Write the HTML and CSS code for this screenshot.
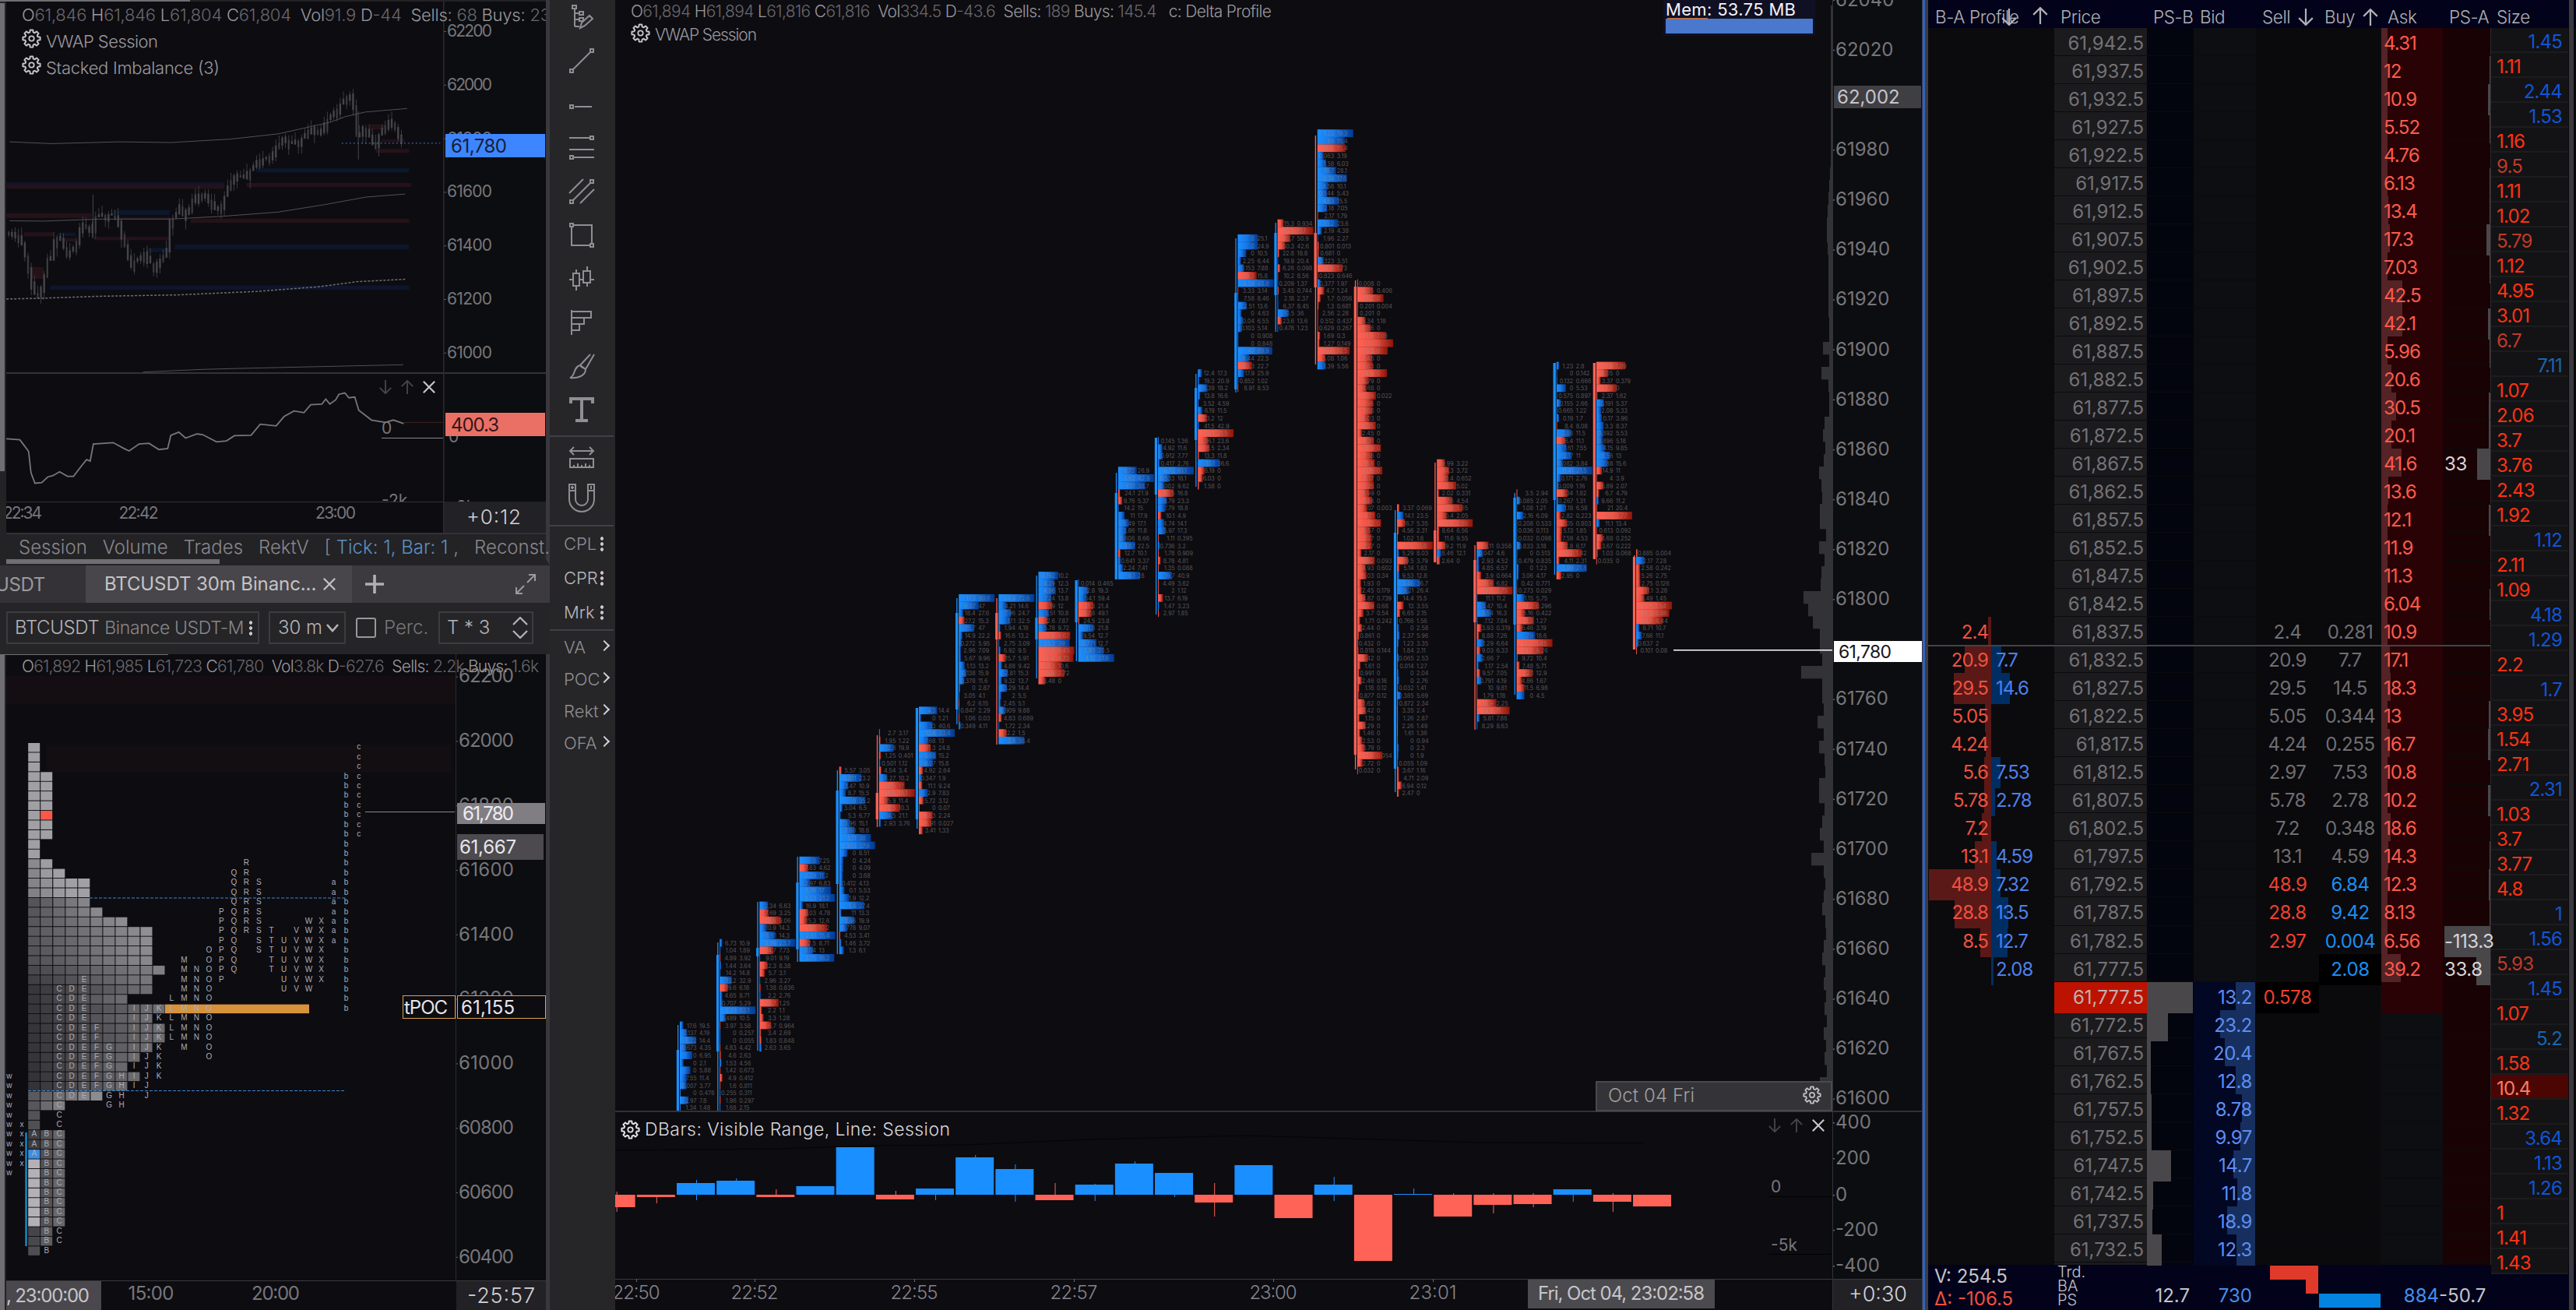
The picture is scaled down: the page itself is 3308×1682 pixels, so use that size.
FILE: index.html
```html
<!DOCTYPE html>
<html lang="en">
<head>
    <meta charset="UTF-8">
    <meta name="viewport" content="width=device-width, initial-scale=1.0">
    <title>BTCUSDT Order Flow</title>
    <link rel="stylesheet" href="styles.css">
</head>
<body>

<!-- Shared icons and gradients -->
<svg class="defs" width="0" height="0">
    <defs>
        <linearGradient id="buy-fill"><stop offset="0" stop-color="#1c8fff"/><stop offset=".45" stop-color="#1878e6"/><stop offset="1" stop-color="#003a94"/></linearGradient>
        <linearGradient id="sell-fill"><stop offset="0" stop-color="#ff6355"/><stop offset=".5" stop-color="#ea5244"/><stop offset="1" stop-color="#8e1508"/></linearGradient>
        <symbol id="gear" viewBox="-14 -14 28 28"><path id="gear-path" fill="none" stroke="currentColor" stroke-width="2.2" stroke-linejoin="round"/><circle r="3.6" fill="none" stroke="currentColor" stroke-width="2"/></symbol>
        <symbol id="close" viewBox="0 0 20 20"><path d="M2 2L18 18M18 2L2 18" stroke="currentColor" stroke-width="2.4"/></symbol>
        <symbol id="down" viewBox="0 0 20 20"><path d="M10 0V19M2 11L10 19L18 11" fill="none" stroke="currentColor" stroke-width="2"/></symbol>
        <symbol id="up" viewBox="0 0 20 20"><path d="M10 20V1M2 9L10 1L18 9" fill="none" stroke="currentColor" stroke-width="2"/></symbol>
    </defs>
</svg>

<div class="workspace">
    <!-- Left column: two small charts -->
    <div class="side">
        <svg id="tick-chart" width="706" height="686" viewBox="0 0 706 686"></svg>
        <div class="options">
            <span>Session</span><span>Volume</span><span>Trades</span><span>RektV</span>
            <span class="bracket">[ <b>Tick: 1, Bar: 1</b> ,</span><span>Reconst.</span>
        </div>
        <div class="tabs">
            <div class="tab">USDT</div>
            <div class="tab active">BTCUSDT 30m Binanc... <svg width="18" height="18"><use href="#close"/></svg></div>
            <svg class="plus" width="26" height="26" viewBox="0 0 26 26"><path d="M13 1V25M1 13H25" stroke="currentColor" stroke-width="3.6"/></svg>
            <svg class="expand" width="26" height="26" viewBox="0 0 26 26"><path d="M15 11L25 1M17 1H25V9M11 15L1 25M1 17V25H9" fill="none" stroke="currentColor" stroke-width="2"/></svg>
        </div>
        <div class="controls">
            <div class="field symbol">BTCUSDT <em>Binance USDT-M</em><i class="dots"></i></div>
            <div class="field period">30 m <svg width="16" height="12" viewBox="0 0 16 12"><path d="M1 2L8 10L15 2" fill="none" stroke="currentColor" stroke-width="2.6"/></svg></div>
            <i class="checkbox"></i><span class="perc">Perc.</span>
            <div class="field mult">T * 3 <svg width="20" height="28" viewBox="0 0 20 28"><path d="M1 10L10 1L19 10M1 18L10 27L19 18" fill="none" stroke="currentColor" stroke-width="2.2"/></svg></div>
        </div>
        <svg id="tpo-chart" width="706" height="842" viewBox="0 840 706 842"></svg>
    </div>

    <!-- Drawing tools -->
    <div class="tools">
        <div class="tool"><svg viewBox="0 0 32 32"><path d="M4 2H9V6H4ZM7 6V29M7 12H13M7 20H13M7 29H13M13 10H18V14H13ZM13 18H18V22H13ZM14 31L16 24L26 15L30 19L20 28Z"/></svg></div>
        <div class="tool"><svg viewBox="0 0 32 32"><path d="M4 28L28 4M1 27H5V31H1ZM27 1H31V5H27Z"/></svg></div>
        <div class="tool"><svg viewBox="0 0 32 32"><path d="M7 19H29M1 17H5V21H1Z"/></svg></div>
        <div class="tool"><svg viewBox="0 0 32 32"><path d="M0 3H27M27 1H31V5H27ZM0 18H32M5 28H32M1 26H5V30H1Z"/></svg></div>
        <div class="tool"><svg viewBox="0 0 32 32"><path d="M5 27L27 5M1 27H5V31H1ZM27 1H31V5H27ZM0 18L18 0M14 31L32 13"/></svg></div>
        <div class="tool"><svg viewBox="0 0 32 32"><path d="M5 3H29V27M27 29H3V5M1 1H5V5H1ZM27 27H31V31H27Z"/></svg></div>
        <div class="tool"><svg viewBox="0 0 32 32"><path d="M5 9H13V25H5ZM9 4V9M9 25V31M18 6H27V21H18ZM23 0V6M23 21V26M0 17H5M13 17H18M27 17H32"/></svg></div>
        <div class="tool"><svg viewBox="0 0 32 32"><path d="M3 0V32M3 2H28V10H3M19 10V18H3M13 18V26H3"/></svg></div>
        <div class="tool"><svg viewBox="0 0 32 32"><path d="M1 31C8 29 5 17 14 15L21 20C21 29 10 32 1 31ZM14 15L27 1M21 20L32 1M14 15C16 19 19 18 21 20"/></svg></div>
        <div class="tool text"><svg viewBox="0 0 32 32"><path d="M2 8V2H30V8M16 2V30M8 30H24"/></svg></div>
        <hr>
        <div class="tool ruler"><svg viewBox="0 0 32 32"><path d="M1 8H31M6 3L1 8L6 13M26 3L31 8L26 13M1 18H31V29H1ZM6 29V26M11 29V24M16 29V26M21 29V24M26 29V26"/></svg></div>
        <div class="tool magnet"><svg viewBox="0 0 34 38"><path d="M1 1H9V20A8 8 0 0 0 25 20V1H33V20A16 16 0 0 1 1 20ZM1 9H9M25 9H33M5 3V7M3 5H7M29 3V7"/></svg></div>
        <hr>
        <div class="item">CPL<i class="dots"></i></div>
        <div class="item lit">CPR<i class="dots"></i></div>
        <div class="item lit">Mrk<i class="dots"></i></div>
        <hr>
        <div class="item more">VA<i class="chev"></i></div>
        <div class="item more">POC<i class="chev"></i></div>
        <div class="item more">Rekt<i class="chev"></i></div>
        <div class="item more">OFA<i class="chev"></i></div>
    </div>

    <!-- Footprint chart -->
    <svg id="main-chart" width="1678" height="1682" viewBox="790 0 1678 1682"></svg>

    <!-- Depth of market -->
    <div class="dom">
        <div class="dom-head">
            <span class="h-profile">B-A Profile<svg width="22" height="22"><use href="#down"/></svg></span>
            <svg class="h-up" width="22" height="22"><use href="#up"/></svg>
            <span class="h-price">Price</span><span class="h-psb">PS-B</span><span class="h-bid">Bid</span>
            <span class="h-sell">Sell <svg width="22" height="22"><use href="#down"/></svg></span>
            <span class="h-buy">Buy <svg width="22" height="22"><use href="#up"/></svg></span>
            <span class="h-ask">Ask</span><span class="h-psa">PS-A</span><span>Size</span>
        </div>
        <div class="dom-body">
            <div class="book" id="book"></div>
            <div class="tape" id="tape"></div>
        </div>
        <div class="dom-foot">
            <div class="totals"><span>V: 254.5</span><span class="neg">Δ: -106.5</span></div>
            <div class="kinds"><span>Trd.</span><span>BA</span><span>PS</span></div>
            <div class="f-ps">12.7</div>
            <div class="f-bid">730</div>
            <svg width="160" height="58" viewBox="2898 1624 160 58"><path fill="#e03a2a" d="M2915 1625H2977V1661H2961V1643H2915Z"/><path fill="#0483e0" d="M2978 1661H3057V1679H2978Z"/></svg>
            <div class="f-ask">884</div>
            <div class="f-psa">-50.7</div>
        </div>
    </div>
</div>

<script src="charts.js"></script>
</body>
</html>
```
FILE: styles.css
```css
* {
    margin: 0;
    padding: 0;
    box-sizing: border-box;
}
body {
    width: 3308px;
    height: 1682px;
    overflow: hidden;
    background: #0d0c11;
    color: #8d8c91;
    font-family: Inter, "Liberation Sans", sans-serif;
    font-size: 24px;
}
svg {
    display: block;
    flex: none;
}
.defs {
    position: absolute;
}
.workspace {
    display: flex;
    height: 1682px;
}

/* Left column */
.side {
    width: 706px;
    flex: none;
    overflow: hidden;
}
.options {
    height: 40px;
    display: flex;
    align-items: center;
    gap: 20px;
    padding: 0 0 0 24px;
    background: #232225;
    border-bottom: 8px solid #232225;
    border-right: 5px solid #3a383c;
    font-weight: 300;
    white-space: nowrap;
    color: #88878b;
    position: relative;
}
.options::after {
    content: "";
    position: absolute;
    left: 8px;
    top: 32px;
    width: 274px;
    height: 6px;
    background: #6f6e72;
}
.options b {
    font-weight: 300;
    color: #5a8fc4;
}
.tabs {
    height: 48px;
    display: flex;
    align-items: center;
    background: #3c3a3e;
    color: #9a999d;
}
.tab {
    width: 110px;
    height: 48px;
    line-height: 50px;
    overflow: hidden;
    text-indent: -6px;
    letter-spacing: -.4px;
    background: #343236;
}
.tab.active {
    width: 342px;
    display: flex;
    align-items: center;
    justify-content: space-between;
    padding: 0 20px 0 30px;
    background: #48464a;
    color: #c4c3c7;
    letter-spacing: -.1px;
    white-space: nowrap;
}
.plus {
    margin-left: 16px;
    color: #b0afb3;
}
.expand {
    margin-left: auto;
    margin-right: 18px;
    color: #9a999d;
}
.controls {
    height: 66px;
    display: flex;
    align-items: center;
    padding-left: 8px;
    background: #252427;
    border-bottom: 3px solid #252427;
    font-weight: 300;
}
.field {
    height: 42px;
    display: flex;
    align-items: center;
    justify-content: space-between;
    border: 2px solid #3d3b3f;
    color: #b5b4b8;
    white-space: nowrap;
}
.field em {
    font-style: normal;
    color: #88878b;
    font-size: 23px;
}
.symbol {
    width: 325px;
    padding: 0 7px 0 9px;
    letter-spacing: -.35px;
}
.period {
    width: 99px;
    margin-left: 12px;
    padding: 0 7px 0 10px;
}
.mult {
    width: 122px;
    margin-left: 13px;
    padding: 0 5px 0 9px;
}
.checkbox {
    width: 26px;
    height: 26px;
    margin: 0 10px 0 13px;
    border: 2px solid #98979b;
    border-radius: 3px;
}
.perc {
    width: 57px;
    color: #77767a;
}
.dots {
    width: 4px;
    height: 20px;
    background: radial-gradient(circle at center, #c4c3c7 2px, transparent 2.4px) 0 0 / 4px 7px;
}

/* Drawing tools */
.tools {
    width: 84px;
    flex: none;
    height: 1682px;
    overflow: hidden;
    background: #262528;
    color: #8f8e92;
}
.tool {
    height: 56px;
    padding: 12px 0 0 25px;
}
.tool:first-child {
    height: 50px;
    padding-top: 5px;
}
.tool svg {
    width: 32px;
    height: 32px;
    fill: none;
    stroke: currentColor;
    stroke-width: 2;
    overflow: visible;
}
.tool.text {
    height: 61px;
}
.tool.text svg {
    stroke-width: 4;
}
.tools hr {
    width: 82px;
    border: 0;
    border-top: 2px solid #414044;
}
.tool.ruler {
    height: 52px;
    padding-top: 10px;
}
.tool.magnet {
    height: 61px;
    padding: 8px 0 0 24px;
}
.tool.magnet svg {
    width: 34px;
    height: 38px;
}
.item {
    height: 44px;
    display: flex;
    align-items: center;
    padding-left: 18px;
    font-size: 22px;
    font-weight: 300;
    position: relative;
}
.item.lit {
    color: #b9b8bc;
}
.item.more {
    height: 41px;
}
.item .dots {
    position: absolute;
    left: 65px;
    top: 12px;
}
.chev {
    position: absolute;
    left: 65px;
    top: 14px;
    width: 10px;
    height: 10px;
    border: solid #d4d3d7;
    border-width: 2px 2px 0 0;
    transform: rotate(45deg);
}

/* Chart text */
text {
    font-family: Inter, "Liberation Sans", sans-serif;
    font-size: 24px;
    fill: #77767b;
}
.legend text {
    fill: #9a999d;
    font-weight: 300;
}
.legend tspan {
    fill: #68676b;
}
.lit-text {
    fill: #c6c5c9;
}
.timer {
    font-size: 27px;
    font-weight: 300;
    fill: #d2d1d5;
}
.cells text {
    font-size: 7.2px;
    fill: #8d8d90;
    fill-opacity: .62;
}
.letters text {
    font-family: "Liberation Sans", sans-serif;
    font-size: 10px;
    fill: #aeadb1;
    text-anchor: middle;
}

/* Depth of market */
.dom {
    width: 840px;
    flex: none;
    background: #0a090c;
    border-left: 8px solid #3d3c40;
    position: relative;
}
.dom::before {
    content: "";
    position: absolute;
    left: -7px;
    top: 0;
    width: 3px;
    height: 1682px;
    background: #2f62c4;
}
.dom::after {
    content: "";
    position: absolute;
    right: 3px;
    top: 0;
    width: 6px;
    height: 1682px;
    background: #3a393d;
}
.dom-head {
    height: 36px;
    display: flex;
    align-items: center;
    padding: 7px 0 0 9px;
    background: #02031a;
    color: #b1b0b6;
    font-size: 22.5px;
    font-weight: 300;
    letter-spacing: -.4px;
    white-space: nowrap;
}
.dom-head svg {
    display: inline-block;
    vertical-align: -3px;
    margin-left: 3px;
}
.h-profile { width: 124px; }
.h-profile svg { margin-left: -24px; }
.dom-head .h-up { margin: -3px 15px 0 0; }
.h-price { width: 119px; }
.h-psb { width: 60px; }
.h-bid { width: 80px; }
.h-sell { width: 80px; }
.h-buy { width: 81px; }
.h-ask { width: 79px; }
.h-psa { width: 61px; }
.dom-body {
    height: 1588px;
    display: flex;
}
.book {
    width: 723px;
    height: 1588px;
    background: linear-gradient(90deg, #0b0a0d 162px, #1b1a1d 162px 281px, #02040e 281px 341px, #0d0e11 341px 421px, #0a090c 421px 581px, #0d0e11 581px 661px, #190204 661px 722px, #2f2a2d 722px);
    position: relative;
}
.book::after {
    content: "";
    position: absolute;
    left: 0;
    top: 792px;
    width: 722px;
    height: 2px;
    background: #444347;
}
.row {
    height: 36.03px;
    display: grid;
    grid-template-columns: 81px 81px 119px 60px 80px 81px 80px 79px 61px;
    border-bottom: 1.4px solid #0b0a0d;
    line-height: 40px;
    color: #6f6e72;
    white-space: nowrap;
    letter-spacing: -.4px;
}
.row > div {
    position: relative;
}
.row span {
    position: relative;
}
.bar {
    position: absolute;
    top: 0;
    bottom: 0;
}
.p-sell { text-align: right; padding-right: 4px; color: #f0503f; letter-spacing: -.9px; }
.p-buy { padding-left: 6px; color: #4d80ea; letter-spacing: -.9px; }
.p-sell .bar { right: 0; background: #5a1917; }
.p-buy .bar { left: 0; background: #002e62; }
.price { text-align: right; padding-right: 4px; color: #737276; letter-spacing: 0; }
.psb .bar { left: 0; background: #49474a; }
.bid { text-align: right; padding-right: 5px; color: #5c8ef2; }
.bid .bar { right: 1px; background: #162f5f; }
.bids .bid { background: #020724; }
.sell, .buy { text-align: center; }
.ask { padding-left: 3px; color: #ff5a4c; letter-spacing: -.9px; }
.asks .ask { background: #280204; }
.ask .bar { left: 0; background: #532325; }
.row .psa { padding-left: 2px; color: #d6d5d9; z-index: 2; }
.psa .bar { right: 0; background: #49474a; }
.hot .sell { color: #f0402f; }
.hot .buy { color: #1a8ff0; }
.best-ask .buy { background: #000; }
.best-bid .sell { background: #000; }
.best-bid .price { background: #bb1300; color: #c3aeb0; }
.best-bid .ask { background: #280204; }
.tape {
    width: 99px;
    height: 1600px;
    background: #131214;
    color: #ff3213;
    font-size: 24px;
    letter-spacing: -.8px;
    line-height: 34px;
    position: relative;
}
.tape div {
    height: 32px;
    padding: 1px 8px 0 7px;
    border-bottom: 2px solid #1c1b1e;
}
.tape .b { text-align: right; color: #0f55d8; }
.tape .c { text-align: right; color: #1766b0; }
.tape .d { color: #c03a28; }
.tape .x { background: #4b0503; color: #ff7a62; }
.dom-foot {
    height: 58px;
    display: flex;
    background: #02031a;
    color: #c4c3c9;
    white-space: nowrap;
}
.totals {
    width: 166px;
    padding-left: 8px;
    display: flex;
    flex-direction: column;
    line-height: 29px;
}
.neg { color: #f0503f; }
.kinds {
    width: 115px;
    display: flex;
    flex-direction: column;
    font-size: 20px;
    line-height: 18px;
    font-weight: 300;
}
.f-ps, .f-bid, .f-ask, .f-psa {
    padding-top: 25px;
}
.f-ps { width: 55px; text-align: right; }
.f-bid { width: 80px; text-align: right; color: #4390ee; }
.dom-foot svg { margin-left: 6px; }
.f-ask { width: 74px; text-align: right; color: #4390ee; }
```
FILE: charts.js
```js
const BLUE = '#1a8fff', RED = '#ff6257';
const $ = id => document.getElementById(id);
const rect = (x, y, w, h, fill, extra = '') => `<rect x="${x}" y="${y}" width="${w}" height="${h}" fill="${fill}" ${extra}/>`;
const text = (x, y, s, extra = '') => `<text x="${x}" y="${y}" ${extra}>${s}</text>`;
const icon = (id, x, y, size, color) => `<use href="#${id}" x="${x}" y="${y}" width="${size}" height="${size}" color="${color}"/>`;
const end = 'text-anchor="end"', mid = 'text-anchor="middle"';

// Gear outline with eight teeth
let gear = '';
for (let i = 0; i < 8; i++) {
    [[-15, 9.4], [-9, 12.6], [9, 12.6], [15, 9.4]].forEach(([da, r]) => {
        const a = (i * 45 + da) * Math.PI / 180;
        gear += `${gear ? 'L' : 'M'}${(Math.cos(a) * r).toFixed(2)} ${(Math.sin(a) * r).toFixed(2)}`;
    });
}
$('gear-path').setAttribute('d', gear + 'Z');

/* ---------- Footprint chart ---------- */
// [first row, wick top, wick bottom, body top, body bottom, side, "sell buy,..."]
const columns = [
    [119, 1316, 1427, 1348, 1427, 'b', '17.6 19.5,0.137 4.19,5.22 14.4,0.673 4.35,0 6.95,0 2.1,0 5.88,7.55 11.4,0.007 3.77,0 0.478,2.97 7.8,1.34 1.48', 20],
    [108, 1210, 1427, 1226, 1350, 'b', '6.73 10.9,1.04 1.89,4.89 3.92,1.44 3.64,14.2 14.8,13.2 32.9,19.6 6.18,4.65 8.71,0.707 5.29,5.33 63.1,0.489 10.5,3.97 3.58,0 0.257,0 0.055,4.83 4.42,4.6 2.63,1.53 4.56,1.42 0.673,4.9 0.412,1.6 0.811,0.255 0.311,1.96 0.297,1.68 2.15'],
    [103, 1158, 1349, 1217, 1228, 'b', '2.34 6.63,7.69 3.25,19.6 9.06,10.9 14.3,6.61 14.3,5.99 23.7,14.7 7.73,9.01 9.19,12.3 8.38,5.7 3.1,2.96 3.27,1.38 0.836,2.2 2.76,10.7 1.25,2.2 1.1,3.3 1.28,6.7 0.964,3.4 2.69,1.83 0.848,2.63 3.65'],
    [97, 1100, 1235, 1133, 1219, 'b', '0 7.25,7.83 4.62,2.09 11.2,2.97 6.83,5.76 17,8.53 21.2,16.9 18.1,8.03 4.78,15.3 12.6,20.1 10.2,2.61 15.4,12.5 8.71,8.04 13,3.75 16.2'],
    [85, 989, 1225, 1015, 1135, 'b', '5.57 3.05,0.011 23.2,1.47 10.9,8.7 15.5,8 35.2,3.04 6.5,5.3 6.77,3.96 15.1,2.68 18.6,5.11 38,0.303 37.6,0 8.51,0 4.24,0 4.09,0 3.68,0.412 4.13,0.1 5.53,1.9 12.2,1.4 27.4,11 13.3,3.96 19.9,0.778 9.07,4.53 3.41,1.46 3.72,1.3 6.1'],
    [80, 944, 1062, 1018, 1052, 'r', '2.7 3.17,1.95 1.22,12.8 19.9,1.25 0.401,0.501 1.12,4.54 3.4,6.27 10.2,29.5 17,35.6 18.1,15.9 11.4,20.5 10.3,14.5 21.1,2.93 3.76'],
    [77, 909, 1064, 909, 1052, 'b', '4.3 14.4,0 1.21,33 40.6,13.6 33.4,7.68 13,31.3 24.8,5.68 15.2,8.07 15.8,4.92 2.64,0.347 1.9,11.1 9.24,2.9 7.83,5.72 3.12,0 0.07,9.83 2.24,6.91 0.027,3.41 1.33'],
    [62, 768, 930, 787, 911, 'b', '17.3 90.6,6.07 47,18.4 27.6,27.2 15.3,15.7 47,14.9 22.2,0.272 5.95,2.96 7.09,5.67 9.96,1.13 13.2,0.138 15.9,0.378 11.6,0 2.87,3.05 4.1,6.2 6.15,0.847 2.29,1.06 0.03,0.349 4.11'],
    [62, 768, 956, 787, 821, 'r', '24.6 72.6,4.21 14.6,7.96 24.7,17.1 32.5,1.94 4.18,16.6 13.2,2.75 3.09,6.92 9.5,15.7 5.91,4.88 9.42,2.81 15.3,9.32 13.7,3.29 14.4,2 5.5,2.45 5.1,0.909 9.88,4.83 0.689,1.72 2.34,12.2 1.5,3.8 38.4'],
    [59, 739, 871, 793, 821, 'b', '0.192 10.2,4.29 12.3,4.96 13.7,7.24 13.8,19 12,5.51 10.8,12.6 7.87,5.78 9.72,25.8 9.67,23.2 39,24.6 6.45,22.4 4.73,22.3 10.6,15.9 2.72,3.48 0'],
    [60, 745, 849, 745, 799, 'b', '0.014 0.465,12.8 19.3,54.1 59.4,31.3 21.4,57.8 49.1,24.5 23.8,11.8 21.8,9.54 12.7,0.771 12.7,3.93 20.5,4.12 27.6'],
    [45, 607, 744, 633, 744, 'b', '6.72 26.9,3.92 42.9,9.17 38.7,24.1 21.9,9.76 5.37,14.2 15,11 17.9,5.49 17.1,2.86 11.8,0.606 8.66,3.87 22.5,12.7 10.1,0.641 3.37,2.24 7.41,4.1 28'],
    [41, 562, 789, 562, 635, 'b', '0.145 1.36,4.92 11.6,0.912 7.77,0.417 2.76,6.72 61.1,0.533 18.1,0.002 9.62,40.5 16.8,9.79 23.3,7.79 18.8,10.1 4.9,4.74 14.1,5.97 17.3,1.11 0.395,0.736 3.2,1.78 0.909,8.78 4.81,1.35 0.088,19.7 40.9,4.49 3.62,2 1.12,13.7 6.19,1.47 3.23,2.97 1.85'],
    [32, 480, 625, 498, 565, 'b', '12.4 17.3,19.3 20.9,6.39 18.2,13.8 16.6,3.52 4.59,6.19 11.5,23.2 12,41.5 42.9,65.1 21.5,36.1 23.6,16.5 2.34,13.3 11.8,10.1 36.6,8.19 0,6.03 0,1.58 0'],
    [14, 306, 504, 376, 500, 'b', '0 25.1,0 24.9,0 10.5,2.25 6.44,0.153 7.88,39.3 15.8,4.34 48.8,3.33 3.14,7.58 8.46,2.51 13.6,0 4.63,0.04 6.55,0.103 5.14,0 0.908,0 0.848,47 89.9,8.44 22.5,40.3 22.7,17.9 25.9,0.852 1.02,8.91 8.53'],
    [12, 286, 426, 299, 379, 'b', '15.3 0.934,98.2 15.1,80.7 50.9,60.3 42.6,22.8 18.8,19.9 20.4,6.26 0.098,10.2 8.56,0.209 1.37,3.45 0.744,2.18 2.37,6.37 8.45,10.5 36,23.6 13.6,0.478 1.23'],
    [0, 174, 468, 299, 369, 'r', '1.22 19.3,1.6 15.4,29.6 15.4,0.063 3.19,1.58 6.03,18.7 28.1,2.74 17.6,4.58 10.1,0.544 5.43,4.63 15.5,2.18 7.05,2.17 1.79,13.2 23.6,2.19 4.38,1.96 2.27,0.801 0.013,0.681 0,0.323 3.51,14.4 1.73,0.823 0.646,0.377 1.97,4.7 1.24,1.7 0.056,1.3 0.681,2.56 2.28,0.512 0.437,0.629 0.267,1.69 0.3,1.27 0.149,26.8 10.5,5.08 1.06,1.39 5.56'],
    [20, 360, 988, 368, 969, 'r', '0.008 0,8.25 0.406,13.2 0,0.201 0.004,0.201 0,5.34 1.18,6.86 0,21.6 7.08,18 0,15.3 0,7.48 0,7.83 0,14.9 0,5.79 0,4.68 0,9.39 0.022,7.96 0,7.68 0,6.03 0,9.35 0,2.45 0,8.31 0,11.9 0,7.58 0,8.8 0,12.6 0,8.17 0,8.35 0,5.99 0,7.44 0,5.07 0.003,9.11 0,12 0,6.57 0,7.27 0,7.27 0,2.17 0,8.92 0.093,4.93 0.602,5.03 0.34,1.93 0,2.45 0.179,4.87 0.739,9.29 0.68,3.7 0.54,1.71 0.242,2.44 0,0.861 0,0.432 0,0.818 0.144,5.42 0,1.61 0,0.991 0,2.46 0.16,1.18 0.12,0.877 0.12,3.62 0,4.42 0,1.15 0,4.29 0,1.46 0,2.53 0,3.79 0,12.6 0.054,2.72 0,0.032 0'],
    [50, 655, 1017, 684, 987, 'b', '3.37 0.069,14.1 23.5,16.7 5.35,4.56 2.31,1.02 1.6,67.5 15.8,5.29 8.03,19.5 3.79,5.14 1.83,9.53 12.8,3.46 36.7,9.21 26.4,14.4 15.5,13 3.55,6.65 2.15,0.766 1.56,0 2.58,2.37 5.96,1.23 3.35,1.84 2.11,0.065 2.53,0.014 1.27,0 2.04,0 2.76,0.032 1.41,0.385 5.69,0.872 2.34,3.35 2.4,1.26 2.87,2.26 1.49,1.61 1.36,0 0.94,0 2.3,0 1.9,0.055 1.09,3.67 1.16,4.71 2.09,6.94 0.12,2.47 0'],
    [44, 594, 722, 681, 722, 'r', '9.99 3.22,14.3 3.72,10.4 0.652,21.5 5.02,2.02 0.331,17.6 4.54,27.4 5.65,10.4 2.05,39.4 8.86,8.64 6.56,11.6 9.55,19.2 11.9,8.46 12.1,2.64 0'],
    [55, 700, 937, 719, 799, 'r', '9.11 0.358,0.047 4.6,2.93 4.52,4.85 6.57,3.9 0.664,19.6 6.82,29.5 2.75,11.1 11.2,3.47 10.4,5.54 16.3,7.12 7.84,3.93 0.319,8.88 7.26,1.29 6.64,9.03 6.33,2.66 7,1.17 2.54,9.57 7.05,0.791 4.19,10 9.81,1.79 1.18,16.9 2.25,35.5 11,5.81 7.86,8.29 8.63'],
    [48, 633, 892, 639, 802, 'b', '3.5 2.94,0.085 2.05,1.08 1.21,2.16 6.09,0.208 0.533,0.036 0.113,0.032 0.098,0.833 3.18,0 0.513,0.479 0.835,0 1.23,3.06 4.17,0.42 0.771,0.273 0.029,1.15 5.75,13.2 0.296,5.16 0.422,11.3 1.27,6.46 3.19,7.9 18.6,22.2 1.45,24.7 9.26,9.72 10.4,7.48 5.71,22.1 12.9,4.86 1.67,11.5 6.98,0 4.5'],
    [31, 466, 738, 466, 642, 'b', '1.23 2.8,0 0.142,0.132 0.666,0 5.53,0.575 0.897,0.155 2.66,0.665 1.22,0.19 1.7,8.4 8.08,2.88 11.5,16.4 11.1,1.61 7.55,2.17 11,0.082 3.84,0.41 21.5,0.171 2.76,0.009 1.16,8.34 1.82,0.267 1.31,1.18 6.58,2.82 0.223,7.05 0.803,5.13 1.85,7.59 4.53,12.8 6.17,16.2 1.42,4.11 2.31,3.99 21.8,2.95 0'],
    [31, 466, 718, 466, 718, 'r', '20.8 1.09,8.05 0,3.37 0.379,13.8 0,2.37 1.62,0.191 5.37,2.08 5.33,0.17 3.96,3.3 8.37,0.892 5.53,0.896 5.18,4.15 9.85,3.56 13,7.88 15.6,14.9 11,4 3.9,6.89 2.07,6.7 4.79,9.66 11.2,21 20.4,27.1 2.77,11.1 13.4,0.613 0.092,4.68 0.252,3.67 0.222,1.03 0.068,0.035 0'],
    [56, 713, 834, 715, 834, 'r', '0.885 0.004,2.17 7.28,2.58 0.242,5.26 2.75,2.75 0.126,11.1 3.28,6.49 1.45,23.6 1.54,26.3 5.86,20.7 4.44,8.71 10.7,7.66 11.1,0.637 2,0.101 0.08']
];
const ROW = 9.625, COL = 51.17;
let out = rect(790, 0, 1564, 1682, '#0d0c11') + rect(2354, 0, 114, 1682, '#0c0d10');

// Session volume profile along the price axis, 16px bins from the top
const profile = [3, 3, 3, 3, 3, 3, 3, 3, 3, 3, 3, 3, 3, 4, 5, 6, 7, 8, 8, 7, 6, 6, 6, 6, 6, 5, 5, 13, 5, 15, 6, 5, 5, 11, 13, 10, 12, 18, 15, 14, 17, 17, 9, 18, 11, 15, 16, 38, 32, 26, 17, 17, 14, 41, 14, 14, 12, 20, 12, 18, 11, 10, 18, 18, 11, 14, 17, 12, 28, 12, 10, 12, 14, 10, 9, 12, 14, 10, 12, 9, 11, 8, 12, 9, 11, 8, 17, 8];
profile.forEach((w, i) => out += rect(2354 - w, 7 + i * 16, w, 16.3, '#333236'));

out += '<g class="cells">';
columns.forEach(([first, wt, wb, bt, bb, side, data, scale], i) => {
    const x = 873 + i * COL, color = side === 'b' ? BLUE : RED;
    const rows = data.split(',').map(r => r.split(' '));
    const max = scale || Math.max(...rows.map(([s, b]) => Math.abs(b - s)));
    rows.forEach(([s, b], k) => {
        const y = 171.6 + (first + k) * ROW;
        out += rect(x, y - 5.4, Math.max(1, Math.abs(b - s) / max * 46), 9.8, `url(#${+b > +s ? 'buy' : 'sell'}-fill)`);
    });
    rows.forEach(([s, b], k) => {
        const y = 174.2 + (first + k) * ROW;
        out += text(x + 21.5, y, s, end) + text(x + 25, y, b);
    });
    out += rect(x - 3, wt, 1.3, wb - wt, color) + rect(x - 4.2, bt, 3.3, bb - bt, color);
});
out += '</g>';

// Price scale
for (let p = 61600; p <= 62040; p += 20) {
    const y = 448.5 + (61900 - p) * 3.2065;
    if (p !== 61780 && p !== 62000) out += rect(2353, y, 3, 1.5, '#666') + text(2357, y + 8, p);
}
out += rect(2149, 834, 204, 1.5, '#fff');
out += rect(2355, 110, 112, 29, '#3f3e43') + text(2359, 133, '62,002', 'class="lit-text"');
out += rect(2355, 823, 113, 27, '#fff') + text(2361, 845, '61,780', 'style="fill:#16151a;font-size:23px" textLength="68"');

// Lower delta pane: bar ends measured from the zero line at 1534
out += rect(790, 1427, 1678, 255, '#0d0c11') + rect(2354, 1427, 114, 255, '#0c0d10');
const delta = [-16, -3, 15, 18, -3, 11, 61, -6, 8, 48, 33, -7, 13, 40, 28, -10, 38, -30, 13, -85, 1, -28, -13, -12, 7, -9, -15];
const wicks = [[4, 22], [0, 11], [19, -7], [21, 0], [7, 0], [0, 0], [0, 0], [5, 0], [0, -7], [51, 0], [39, -9], [15, 0], [14, -8], [43, 0], [28, -3], [15, -28], [38, 0], [0, 0], [23, -8], [0, 0], [8, 0], [2, 0], [2, -24], [2, -16], [7, -9], [2, -22], [0, 0]];
delta.forEach((d, i) => {
    const x = 869 + (i - 2) * COL, color = d > 0 ? BLUE : RED;
    out += rect(Math.max(790, x), d > 0 ? 1534 - d : 1534, x < 790 ? x + 49 - 790 : 49, Math.abs(d), color);
    const [hi, lo] = wicks[i];
    out += rect(x + 25, 1534 - hi, 1, hi + Math.abs(lo), color);
});
[['400', 1441], ['200', 1487], ['0', 1534], ['-200', 1579], ['-400', 1625]].forEach(([s, y]) => out += rect(2353, y, 3, 1.5, '#666') + text(2357, y + 8, s));
out += text(2274, 1531, '0', 'style="font-size:21px"') + text(2274, 1606, '-5k', 'style="font-size:21px"') + rect(2272, 1536, 80, 1, '#000') + rect(2272, 1610, 80, 1, '#000');
out += `<path d="M790 1477L1000 1475L1120 1471L1240 1470L1400 1463L1600 1458L1900 1467L2110 1468" fill="none" stroke="#050508"/>`;
out += rect(790, 1426, 1678, 2, '#333236') + rect(790, 1642, 1678, 1, '#3a393d') + rect(2353, 0, 1, 1682, '#333236');
out += `<g class="legend">${icon('gear', 797, 1438, 25, '#e4e3e7')}${text(828, 1458, 'DBars: Visible Range, Line: Session', 'textLength="392" style="fill:#d8d7db;font-size:23px"')}</g>`;
out += icon('down', 2270, 1436, 18, '#47464a') + icon('up', 2298, 1436, 18, '#47464a') + icon('close', 2326, 1436, 18, '#c6c5c9');

// Date tag and time scale
out += rect(2050, 1389, 302, 37, '#343337', 'stroke="#4a494d" stroke-width="2"') + text(2065, 1415, 'Oct 04 Fri', 'textLength="111" style="fill:#a09fa3;font-weight:300"') + icon('gear', 2315, 1394, 24, '#c0bfc3');
[['22:50', 817], ['22:52', 969], ['22:55', 1174], ['22:57', 1379], ['23:00', 1635], ['23:01', 1840]].forEach(([s, x]) => out += rect(x, 1642, 1, 4, '#666') + text(x, 1668, s, mid + ' textLength="61" style="font-weight:300;fill:#85848a"'));
out += rect(1962, 1643, 240, 37, '#4b4a4e') + text(2082, 1669, 'Fri, Oct 04, 23:02:58', mid + ' textLength="214" class="lit-text"');
out += rect(2354, 1643, 114, 39, '#222125') + text(2449, 1671, '+0:30', end + ' textLength="75" class="timer"');

// Legend and memory badge
out += `<g class="legend">${text(810, 22, 'O<tspan>61,894</tspan> H<tspan>61,894</tspan> L<tspan>61,816</tspan> C<tspan>61,816</tspan>&#160; Vol<tspan>334.5</tspan> D<tspan>-43.6</tspan>&#160; Sells: <tspan>189</tspan> Buys: <tspan>145.4</tspan>&#160;&#160; c: Delta Profile', 'textLength="823" style="font-size:21px"')}
${icon('gear', 810, 30, 25, '#c6c5c9')}${text(841, 52, 'VWAP Session', 'textLength="131" style="font-size:21px"')}</g>`;
out += rect(2136, 0, 195, 46, '#101024') + text(2139, 20, 'Mem: 53.75 MB', 'textLength="167" style="fill:#f4f3f8;font-size:22px"') + rect(2139, 24, 189, 19, '#4a78cc') + rect(2141, 23, 52, 2, '#b4704a');
$('main-chart').innerHTML = out;

/* ---------- Tick chart, traced in a 1568 unit square ---------- */
const SX = 1 / 1.96, SY = 1 / 2.24;
const line = (pts, stroke, extra = '') => `<path d="M${pts.map(([x, y]) => `${(x * SX).toFixed(1)} ${(y * SY).toFixed(1)}`).join('L')}" fill="none" stroke="${stroke}" ${extra}/>`;
out = rect(0, 0, 706, 686, '#232225') + rect(8, 2, 562, 682, '#0d0c11') + rect(570, 2, 131, 682, '#0c0d10');
const zones = [[16, 565, 536, 14, 'r'], [620, 1035, 532, 12, 'r'], [645, 1030, 490, 12, 'b'], [16, 230, 620, 14, 'r'], [285, 428, 611, 14, 'b'], [300, 428, 628, 6, 'r'], [480, 1030, 635, 12, 'r'], [60, 135, 674, 12, 'r'], [145, 190, 674, 10, 'b'], [160, 190, 690, 10, 'r'], [235, 425, 686, 10, 'r'], [370, 430, 719, 12, 'b'], [440, 1030, 710, 14, 'b'], [80, 110, 785, 34, 'r'], [125, 1030, 827, 12, 'b'], [930, 970, 365, 16, 'r'], [960, 1020, 405, 8, 'r'], [945, 1030, 434, 12, 'r'], [16, 565, 527, 6, 'b']];
zones.forEach(([x1, x2, y, h, c]) => out += rect(x1 * SX, (y - h / 2) * SY, (x2 - x1) * SX, h * SY, c === 'r' ? '#251219' : '#0c172c'));
const trend = [[20, 670], [50, 680], [60, 710], [72, 760], [80, 800], [88, 850], [96, 850], [104, 835], [112, 820], [122, 745], [135, 740], [140, 690], [152, 680], [160, 705], [170, 725], [185, 725], [195, 700], [205, 655], [215, 645], [225, 665], [235, 660], [242, 625], [255, 620], [285, 622], [298, 625], [305, 660], [315, 695], [325, 740], [335, 765], [345, 745], [355, 750], [365, 725], [380, 755], [390, 775], [400, 755], [410, 750], [420, 720], [428, 715], [430, 640], [445, 620], [455, 595], [465, 610], [475, 625], [485, 580], [493, 560], [503, 575], [515, 555], [525, 575], [535, 580], [547, 610], [560, 590], [570, 565], [580, 530], [590, 510], [605, 505], [615, 510], [630, 495], [645, 475], [655, 460], [675, 460], [690, 440], [705, 415], [715, 400], [725, 405], [735, 415], [745, 410], [760, 405], [772, 390], [782, 370], [795, 375], [805, 385], [815, 370], [830, 340], [845, 325], [855, 310], [870, 290], [882, 270], [892, 295], [900, 390], [910, 385], [920, 365], [930, 385], [940, 415], [950, 410], [960, 385], [975, 360], [985, 345], [998, 370], [1008, 400], [1016, 408]];
const at = x => {
    const i = Math.max(1, trend.findIndex(p => p[0] >= x));
    const [a, b] = [trend[i - 1], trend[i]];
    return a[1] + (b[1] - a[1]) * (x - a[0]) / (b[0] - a[0]);
};
for (let x = 22, n = 0; x < 1016; x += 8.1, n++) {
    const o = at(Math.max(20, x - 4)), c = at(Math.min(1015, x + 4));
    const top = Math.min(o, c) - 2 - n % 3 * 3, h = Math.abs(o - c) + 6 + n % 4 * 5;
    out += rect(x * SX - 1.2, top * SY, 2.4, h * SY, n % 3 ? '#47464b' : '#333236') + rect(x * SX - .4, (top - 5 - n % 5 * 4) * SY, .8, (h + 11 + n % 4 * 6) * SY, '#47464b');
}
out += rect(233 * SX, 560 * SY, 1, 55, '#47464b') + rect(901 * SX, 320 * SY, 1, 62, '#47464b');
out += line([[24, 408], [130, 413], [300, 408], [430, 410], [580, 400], [700, 385], [830, 352], [870, 335], [920, 322], [1025, 312]], '#505055');
out += line([[24, 635], [110, 636], [250, 630], [430, 630], [560, 622], [700, 610], [820, 588], [920, 567], [1020, 558]], '#505055');
out += line([[16, 860], [100, 858], [250, 852], [450, 848], [650, 838], [800, 825], [900, 810], [1020, 803]], '#6e6d72', 'stroke-width="1.5" stroke-dasharray="3 2"');
out += line([[360, 1070], [520, 1062], [700, 1057], [1015, 1049]], '#505055');
out += line([[16, 1262], [50, 1265], [60, 1280], [72, 1298], [78, 1360], [88, 1390], [105, 1388], [120, 1372], [133, 1368], [150, 1357], [170, 1370], [185, 1370], [205, 1340], [218, 1322], [227, 1326], [235, 1277], [285, 1273], [312, 1290], [325, 1297], [350, 1277], [375, 1275], [400, 1293], [422, 1290], [430, 1252], [450, 1243], [467, 1260], [495, 1248], [510, 1250], [545, 1271], [570, 1268], [590, 1253], [632, 1252], [655, 1220], [695, 1225], [715, 1198], [740, 1182], [765, 1187], [782, 1164], [810, 1162], [820, 1148], [830, 1162], [845, 1150], [853, 1134], [868, 1130], [878, 1144], [893, 1142], [903, 1180], [935, 1208], [970, 1215], [990, 1208], [1016, 1218]], '#77767b', 'stroke-width="1.8"');
out += line([[860, 412], [1108, 412]], '#3f78d0', 'stroke-dasharray="2 3"') + line([[1018, 1215], [1114, 1215]], '#7a3b38', 'stroke-dasharray="1 1"') + rect(490, 562, 80, 1, '#88878b');
for (let i = 0; i < 7; i++) out += rect(570, 40 + i * 68.8, 3, 1, '#666') + text(574, 47 + i * 68.8, 62200 - i * 200, 'textLength="58" style="font-size:21px"');
out += text(490, 557, '0', 'style="font-size:21px"') + text(576, 568, '0', 'style="font-size:21px"') + text(490, 650, '-2k', 'style="font-size:21px"') + text(586, 658, '2k', 'style="font-size:21px"');
out += rect(8, 644, 562, 40, '#0d0c11') + rect(570, 644, 131, 40, '#222125');
out += rect(572, 172, 128, 30, '#3d86ff') + text(579, 196, '61,780', 'textLength="72" style="fill:#16203a"') + rect(572, 530, 128, 30, '#ea7066') + text(579, 554, '400.3', 'textLength="62" style="fill:#33161a"');
out += rect(8, 478, 693, 2, '#333236') + rect(8, 644, 562, 1, '#333236') + rect(8, 684, 693, 2, '#333236') + rect(569, 2, 1.5, 682, '#2c2b2f');
out += icon('down', 486, 488, 18, '#47464a') + icon('up', 514, 488, 18, '#47464a') + icon('close', 542, 488, 18, '#c6c5c9');
out += text(4, 666, '22:34', 'textLength="50" style="font-size:21px"') + text(178, 666, '22:42', mid + ' textLength="51" style="font-size:21px"') + text(431, 666, '23:00', mid + ' textLength="52" style="font-size:21px"') + text(634, 673, '+0:12', mid + ' textLength="70" class="timer" style="font-size:26px"');
out += `<g class="legend">${text(28, 27, 'O<tspan>61,846</tspan> H<tspan>61,846</tspan> L<tspan>61,804</tspan> C<tspan>61,804</tspan>&#160; Vol<tspan>91.9</tspan> D<tspan>-44</tspan>&#160; Sells: <tspan>68</tspan> Buys: <tspan>23</tspan>', 'textLength="679" style="font-size:22px"')}
${icon('gear', 28, 37, 25, '#c6c5c9')}${text(59, 61, 'VWAP Session', 'textLength="144" style="font-size:22px"')}
${icon('gear', 28, 71, 25, '#c6c5c9')}${text(59, 95, 'Stacked Imbalance (3)', 'textLength="223" style="font-size:22px"')}</g>`;
out += rect(701, 0, 5, 686, '#3a383c') + rect(0, 0, 244, 2, '#6f6e72') + rect(0, 4, 6, 601, '#6f6e72') + rect(0, 605, 8, 81, '#232225');
$('tick-chart').innerHTML = out;

/* ---------- TPO chart ---------- */
out = rect(0, 840, 706, 842, '#0d0c11') + rect(586, 840, 115, 842, '#0c0d10') + rect(8, 868, 578, 36, '#140e12') + rect(60, 956, 520, 36, '#120e12');
const counts = [1, 1, 1, 2, 2, 2, 2, 2, 2, 2, 1, 1, 2, 3, 5, 5, 5, 6, 8, 10, 10, 10, 10, 11, 10, 10, 8, 11, 10, 11, 11, 10, 9, 8, 9, 8, 6, 3, 1, 1, 3, 3, 3, 3, 3, 3, 3, 3, 3, 3, 2, 2, 1];
const shade = [[0, 160], [11, 160], [12, 138], [15, 130], [16, 85], [19, 90], [22, 82], [25, 56], [35, 52], [36, 90], [39, 80], [40, 62], [49, 64], [52, 78]];
const TW = 16.03, TH = 12.43, TX = 36.2, TY = 954;
counts.forEach((n, r) => {
    const i = Math.max(1, shade.findIndex(s => s[0] >= r)), [a, b] = [shade[i - 1], shade[i]];
    const base = a[1] + (b[1] - a[1]) * (r - a[0]) / (b[0] - a[0]);
    for (let c = 0; c < n; c++) {
        const v = Math.round(Math.min(161, base + c / Math.max(3, n) * 60));
        let fill = `rgb(${v},${v - 1},${v + 3})`;
        if (r === 7 && c === 1) fill = '#fb5848';
        if (r === 42 && c === 0) fill = '#3c8ee4';
        if (r > 42 && r < 50 && c === 0) fill = '#b3b1b6';
        out += rect((TX + c * TW).toFixed(1), (TY + r * TH).toFixed(1), 15, 11.5, fill);
    }
});
out += rect(212, TY + 27 * TH, 185, 11.5, '#d8933a') + rect(32.5, 1454, 2, 146, '#11a5e8');
const letters = { A: [0, 40, 42], B: [1, 40, 52], C: [2, 25, 51], D: [3, 25, 36], E: [4, 24, 36], F: [5, 29, 35], G: [6, 31, 37], H: [7, 34, 37], I: [8, 27, 35], J: [9, 27, 36], K: [10, 27, 34], L: [11, 26, 30], M: [12, 22, 31], N: [13, 23, 30], O: [14, 21, 32], P: [15, 17, 24], Q: [16, 13, 23], R: [17, 12, 19], S: [18, 14, 21], T: [19, 19, 23], U: [20, 20, 25], V: [21, 19, 25], W: [22, 18, 25], X: [23, 18, 24], a: [24, 14, 20], b: [25, 3, 27], c: [26, 0, 9], w: [-2, 34, 44], x: [-1, 39, 43] };
out += '<g class="letters">';
for (const [ch, [c, from, to]] of Object.entries(letters))
    for (let r = from; r <= to; r++) out += text((TX + c * TW + 7.7).toFixed(1), (TY + r * TH + 8.2).toFixed(1), ch);
out += '</g><path d="M115 1153H444M36 1400.5H444" stroke="#3f86cc" stroke-dasharray="4 2" fill="none"/>';
for (let i = 0; i < 10; i++) out += rect(586, 868.6 + i * 82.8, 2, 1, '#666') + text(589, 876.4 + i * 82.8, 62200 - i * 200, 'textLength="71"');
out += rect(469, 1042, 115, 1, '#88878b') + rect(585, 840, 1, 842, '#2c2b2f');
out += rect(587, 1031, 113, 27, '#807e83') + text(594, 1053, '61,780', 'textLength="66" style="fill:#eeedf1"') + rect(587, 1071, 111, 33, '#4c4a4e') + text(590, 1096, '61,667', 'textLength="73" style="fill:#e6e5e9"');
out += rect(517.5, 1278.5, 67, 29, '#0d0c11', 'stroke="#e0a04c"') + rect(587.5, 1278.5, 113, 29, '#0d0c11', 'stroke="#e0a04c"') + text(519, 1302, 'tPOC', 'textLength="56" style="fill:#e6e5e9"') + text(592, 1302, '61,155', 'textLength="69" style="fill:#e6e5e9"');
out += rect(8, 1644, 693, 38, '#0d0c11') + rect(8, 1644, 693, 1, '#3a393d') + rect(8, 1645, 122, 37, '#4a484c') + rect(586, 1645, 115, 37, '#222125');
out += text(8, 1672, ', 23:00:00', 'textLength="107" class="lit-text"') + text(194, 1669, '15:00', mid + ' textLength="59"') + text(354, 1669, '20:00', mid + ' textLength="62"') + text(687, 1673, '-25:57', end + ' textLength="87" class="timer"');
out += `<g class="legend">${text(28, 863, 'O<tspan>61,892</tspan> H<tspan>61,985</tspan> L<tspan>61,723</tspan> C<tspan>61,780</tspan>&#160; Vol<tspan>3.8k</tspan> D<tspan>-627.6</tspan>&#160; Sells: <tspan>2.2k</tspan> Buys: <tspan>1.6k</tspan>', 'textLength="664" style="font-size:21px"')}</g>`;
out += rect(701, 840, 5, 842, '#3a383c') + rect(0, 840, 6, 842, '#6f6e72') + rect(6, 840, 2, 842, '#232225') + rect(0, 838, 216, 3, '#6f6e72');
$('tpo-chart').innerHTML = out;

/* ---------- Depth of market ---------- */
const asks = '4.31 12 10.9 5.52 4.76 6.13 13.4 17.3 7.03 42.5 42.1 5.96 20.6 30.5 20.1 41.6 13.6 12.1 11.9 11.3 6.04 10.9 17.1 18.3 13 16.7 10.8 10.2 18.6 14.3 12.3 8.13 6.56 39.2'.split(' ');
const bids = '13.2 23.2 20.4 12.8 8.78 9.97 14.7 11.8 18.9 12.3'.split(' ');
const psb = [59, 27, 5, 5, 6, 6, 31, 8, 7, 19];
const psa = { 1: [1], 2: [3], 3: [1], 5: [1], 6: [1], 7: [5], 8: [1], 10: [3], 11: [1], 13: [2], 14: [2], 15: [17, '33'], 17: [2], 20: [1], 24: [2], 25: [3], 27: [3], 29: [1], 30: [2], 31: [1], 32: [59, '-113.3'], 33: [18, '33.8'] };
// Traded at price, by ask row: [profile sell, profile buy, sell, buy]
const traded = { 21: ['2.4', '', '2.4', '0.281'], 22: ['20.9', '7.7', '20.9', '7.7'], 23: ['29.5', '14.6', '29.5', '14.5'], 24: ['5.05', '', '5.05', '0.344'], 25: ['4.24', '', '4.24', '0.255'], 26: ['5.6', '7.53', '2.97', '7.53'], 27: ['5.78', '2.78', '5.78', '2.78'], 28: ['7.2', '', '7.2', '0.348'], 29: ['13.1', '4.59', '13.1', '4.59'], 30: ['48.9', '7.32', '48.9', '6.84'], 31: ['28.8', '13.5', '28.8', '9.42'], 32: ['8.5', '12.7', '2.97', '0.004'], 33: ['', '2.08', '', '2.08'], 34: ['', '', '0.578', ''] };
const cell = (cls, value = '', bar = 0) => `<div class="${cls}">${bar ? `<i class="bar" style="width:${bar}px"></i>` : ''}<span>${value}</span></div>`;
out = '';
for (let i = 0; i < 44; i++) {
    const [ps, pb, s, b] = traded[i] || ['', '', '', ''];
    const ask = asks[i], bid = bids[i - 34], price = (i < 34 ? 942.5 - i * 5 : 777.5 - (i - 34) * 5).toFixed(1);
    const cls = ['row', ask ? 'asks' : 'bids', i > 29 ? 'hot' : '', i === 33 ? 'best-ask' : '', i === 34 ? 'best-bid' : ''].join(' ');
    out += `<div class="${cls}">` + cell('p-sell', ps, ps * 1.63) + cell('p-buy', pb, pb * 1.63) + cell('price', '61,' + price)
        + cell('psb', '', psb[i - 34]) + cell('bid', bid, bid ? bid * 1.93 : 0) + cell('sell', s) + cell('buy', b)
        + cell('ask', ask, ask ? Math.max(8, ask * .635) : 0) + cell('psa', psa[i] && psa[i][1], psa[i] && psa[i][0]) + '</div>';
}
$('book').innerHTML = out;

// b/c = buys, d = dim sell, x = large sell
const tape = '1.45b 1.11 2.44b 1.53b 1.16 9.5d 1.11 1.02 5.79d 1.12 4.95 3.01 6.7d 7.11c 1.07 2.06 3.7 3.76 2.43 1.92 1.12b 2.11 1.09 4.18b 1.29b 2.2 1.7b 3.95 1.54 2.71 2.31b 1.03 3.7 3.77 4.8 1b 1.56b 5.93d 1.45b 1.07 5.2c 1.58 10.4x 1.32 3.64b 1.13b 1.26b 1 1.41 1.43'.split(' ');
$('tape').innerHTML = tape.map(t => `<div class="${t.replace(/[\d.]/g, '')}">${parseFloat(t)}</div>`).join('');
```
